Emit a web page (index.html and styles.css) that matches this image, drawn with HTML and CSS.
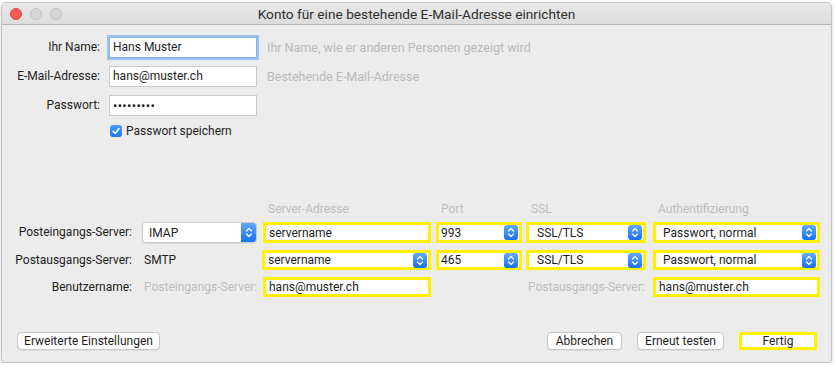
FILE: index.html
```html
<!DOCTYPE html>
<html lang="de">
<head>
<meta charset="utf-8">
<title>Konto einrichten</title>
<link rel="stylesheet" href="styles.css">
</head>
<body>
<div class="window">
  <div class="titlebar">
    <div class="lights">
      <span class="light red"></span>
      <span class="light gray"></span>
      <span class="light gray"></span>
    </div>
    <div class="title">Konto für eine bestehende E-Mail-Adresse einrichten</div>
  </div>
  <div class="content">
    <div class="form">
      <label class="lbl">Ihr Name:</label>
      <div class="input focus">Hans Muster</div>
      <div class="hint">Ihr Name, wie er anderen Personen gezeigt wird</div>

      <label class="lbl">E-Mail-Adresse:</label>
      <div class="input">hans@muster.ch</div>
      <div class="hint">Bestehende E-Mail-Adresse</div>

      <label class="lbl">Passwort:</label>
      <div class="input dots">•••••••••</div>
      <div></div>

      <div></div>
      <div class="check">
        <span class="box"><svg width="10" height="10" viewBox="0 0 10 10"><path d="M2 5.3 L4.2 7.5 L8 2.6" fill="none" stroke="#fff" stroke-width="1.6" stroke-linecap="round" stroke-linejoin="round"/></svg></span>
        <span>Passwort speichern</span>
      </div>
      <div></div>
    </div>

    <div class="servers">
      <div></div>
      <div></div>
      <div class="head">Server-Adresse</div>
      <div class="head">Port</div>
      <div class="head">SSL</div>
      <div class="head">Authentifizierung</div>

      <div class="slbl">Posteingangs-Server:</div>
      <div class="popup w-proto"><span>IMAP</span><span class="arrow"><svg width="8" height="11" viewBox="0 0 8 11"><path d="M1.5 4 L4 1.5 L6.5 4 M1.5 7 L4 9.5 L6.5 7" fill="none" stroke="#fff" stroke-width="1.2" stroke-linecap="round" stroke-linejoin="round"/></svg></span></div>
      <div class="yel w-server"><span class="txt p3">servername</span></div>
      <div class="yel w-port"><span class="txt p2">993</span><span class="arrow"><svg width="8" height="11" viewBox="0 0 8 11"><path d="M1.5 4 L4 1.5 L6.5 4 M1.5 7 L4 9.5 L6.5 7" fill="none" stroke="#fff" stroke-width="1.2" stroke-linecap="round" stroke-linejoin="round"/></svg></span></div>
      <div class="yel w-ssl"><span class="txt p8">SSL/TLS</span><span class="arrow"><svg width="8" height="11" viewBox="0 0 8 11"><path d="M1.5 4 L4 1.5 L6.5 4 M1.5 7 L4 9.5 L6.5 7" fill="none" stroke="#fff" stroke-width="1.2" stroke-linecap="round" stroke-linejoin="round"/></svg></span></div>
      <div class="yel w-auth"><span class="txt p7">Passwort, normal</span><span class="arrow"><svg width="8" height="11" viewBox="0 0 8 11"><path d="M1.5 4 L4 1.5 L6.5 4 M1.5 7 L4 9.5 L6.5 7" fill="none" stroke="#fff" stroke-width="1.2" stroke-linecap="round" stroke-linejoin="round"/></svg></span></div>

      <div class="slbl">Postausgangs-Server:</div>
      <div class="plain">SMTP</div>
      <div class="yel w-server shift"><span class="txt p3">servername</span><span class="arrow"><svg width="8" height="11" viewBox="0 0 8 11"><path d="M1.5 4 L4 1.5 L6.5 4 M1.5 7 L4 9.5 L6.5 7" fill="none" stroke="#fff" stroke-width="1.2" stroke-linecap="round" stroke-linejoin="round"/></svg></span></div>
      <div class="yel w-port"><span class="txt p2">465</span><span class="arrow"><svg width="8" height="11" viewBox="0 0 8 11"><path d="M1.5 4 L4 1.5 L6.5 4 M1.5 7 L4 9.5 L6.5 7" fill="none" stroke="#fff" stroke-width="1.2" stroke-linecap="round" stroke-linejoin="round"/></svg></span></div>
      <div class="yel w-ssl"><span class="txt p8">SSL/TLS</span><span class="arrow"><svg width="8" height="11" viewBox="0 0 8 11"><path d="M1.5 4 L4 1.5 L6.5 4 M1.5 7 L4 9.5 L6.5 7" fill="none" stroke="#fff" stroke-width="1.2" stroke-linecap="round" stroke-linejoin="round"/></svg></span></div>
      <div class="yel w-auth"><span class="txt p7">Passwort, normal</span><span class="arrow"><svg width="8" height="11" viewBox="0 0 8 11"><path d="M1.5 4 L4 1.5 L6.5 4 M1.5 7 L4 9.5 L6.5 7" fill="none" stroke="#fff" stroke-width="1.2" stroke-linecap="round" stroke-linejoin="round"/></svg></span></div>

      <div class="slbl">Benutzername:</div>
      <div class="plain muted">Posteingangs-Server:</div>
      <div class="yel w-server"><span class="txt p3">hans@muster.ch</span></div>
      <div></div>
      <div class="plain muted">Postausgangs-Server:</div>
      <div class="yel w-auth"><span class="txt p3">hans@muster.ch</span></div>
    </div>

    <div class="buttons">
      <div class="btn w-adv">Erweiterte Einstellungen</div>
      <div class="spacer"></div>
      <div class="btn w-cancel">Abbrechen</div>
      <div class="btn w-retry">Erneut testen</div>
      <div class="btn yelbtn w-done">Fertig</div>
    </div>
  </div>
</div>
</body>
</html>
```

FILE: styles.css
```css
* { box-sizing: border-box; }
html, body { margin: 0; padding: 0; background: #ffffff; }
body {
  font-family: Roboto, "Liberation Sans", sans-serif;
  font-size: 12px;
  color: #1e1e1e;
}
.window {
  margin: 2px 0 0 1px;
  width: 831px;
  height: 361px;
  border: 1px solid #c4c4c4;
  border-radius: 5px 5px 4px 4px;
  background: #ececec;
  display: flex;
  flex-direction: column;
  overflow: hidden;
  box-shadow: 0 1px 3px rgba(0,0,0,0.18);
}
.titlebar {
  height: 22px;
  flex: none;
  background: linear-gradient(#e9e9e9, #dcdcdc);
  border-bottom: 1px solid #b3b3b3;
  display: flex;
  align-items: center;
  position: relative;
}
.lights {
  display: flex;
  gap: 8px;
  padding-left: 8px;
}
.light {
  width: 12px;
  height: 12px;
  border-radius: 50%;
}
.light.red { background: #fc5b57; border: 1px solid #e2463f; }
.light.gray { background: #d6d6d6; border: 1px solid #c3c3c3; }
.title {
  position: absolute;
  left: 0; right: 0; top: 0; bottom: 0;
  text-align: center;
  line-height: 22px;
  font-size: 13.7px;
  color: #2e2e2e;
}
.content {
  flex: 1;
  display: flex;
  flex-direction: column;
}
.form {
  margin-top: 12px;
  display: grid;
  grid-template-columns: 98px 148px 1fr;
  grid-auto-rows: 21px;
  row-gap: 8px;
  column-gap: 9px;
}
.lbl {
  text-align: right;
  line-height: 21px;
  white-space: nowrap;
}
.input {
  background: #fff;
  border: 1px solid #c9c9c9;
  line-height: 19px;
  padding-left: 3px;
  white-space: nowrap;
}
.input.focus {
  box-shadow: 0 0 0 2px #9cc4f3;
  border-color: #86b3ea;
}
.input.dots { letter-spacing: 0.3px; font-size: 13px; }
.hint {
  color: #b9b9b9;
  line-height: 21px;
  padding-left: 1px;
  font-size: 12.5px;
  white-space: nowrap;
}
.check {
  display: flex;
  align-items: center;
  gap: 4px;
  height: 14px;
  margin-left: 1px;
}
.box {
  width: 12px;
  height: 12px;
  border-radius: 3px;
  background: linear-gradient(#4b9bfb, #1f76f2);
  display: flex;
  align-items: center;
  justify-content: center;
}
.servers {
  margin-top: 58px;
  display: grid;
  grid-template-columns: 140px 121px 173px 90px 127px 167px;
  grid-template-rows: 13px 21px 21px 21px;
  row-gap: 6px;
}
.head {
  color: #bdbdbd;
  line-height: 13px;
  padding-left: 5px;
  white-space: nowrap;
}
.slbl {
  text-align: right;
  padding-right: 10px;
  line-height: 21px;
  white-space: nowrap;
}
.plain {
  line-height: 21px;
  padding-left: 2px;
  white-space: nowrap;
}
.muted { color: #bdbdbd; }
.popup {
  background: #fff;
  border: 1px solid #cbcbcb;
  border-radius: 4px;
  display: flex;
  align-items: center;
  justify-content: space-between;
  padding-left: 6px;
  box-shadow: 0 1px 1px rgba(0,0,0,0.08);
  overflow: hidden;
}
.popup .arrow {
  height: 100%;
  width: 15px;
  border-radius: 0;
}
.arrow {
  width: 14px;
  height: 15px;
  border-radius: 3px;
  background: linear-gradient(#62a9fc, #1a6ff0);
  display: flex;
  align-items: center;
  justify-content: center;
  flex: none;
}
.yel {
  border: 3px solid #fff200;
  background: #fff;
  display: flex;
  align-items: center;
  justify-content: space-between;
  padding-right: 1px;
  white-space: nowrap;
}
.servers > div:nth-child(n+13) { margin-top: 1px; }
.shift { margin-left: -1px; width: 169px !important; }
.w-proto { width: 115px; }
.w-server { width: 168px; }
.w-port { width: 86px; }
.w-ssl { width: 120px; }
.w-auth { width: 167px; }
.p2 { padding-left: 2px; }
.p3 { padding-left: 3px; }
.p7 { padding-left: 7px; }
.p8 { padding-left: 8px; }
.buttons {
  margin-top: auto;
  display: flex;
  align-items: center;
  padding: 0 14px 12px 15px;
  gap: 15px;
}
.spacer { flex: 1; }
.btn {
  height: 18px;
  background: #fff;
  border: 1px solid #c6c6c6;
  border-radius: 4px;
  text-align: center;
  line-height: 16px;
  box-shadow: 0 1px 1px rgba(0,0,0,0.06);
  white-space: nowrap;
}
.yelbtn {
  border: 3px solid #fff200;
  border-radius: 0;
  line-height: 12px;
  box-shadow: none;
}
.w-adv { width: 143px; }
.w-cancel { width: 75px; }
.w-retry { width: 87px; }
.w-done { width: 78px; }
```
